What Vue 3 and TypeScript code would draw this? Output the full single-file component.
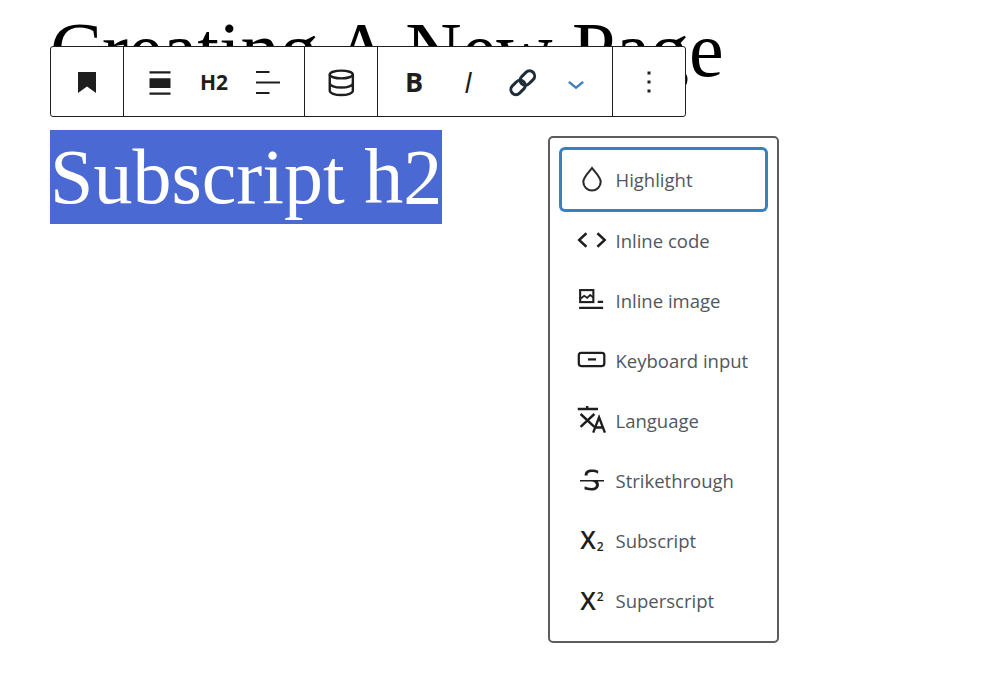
<script setup lang="ts">
interface FormatItem {
  label: string
  kind: 'highlight' | 'code' | 'image' | 'keyboard' | 'language' | 'strike' | 'sub' | 'sup'
}

const items: FormatItem[] = [
  { label: 'Highlight', kind: 'highlight' },
  { label: 'Inline code', kind: 'code' },
  { label: 'Inline image', kind: 'image' },
  { label: 'Keyboard input', kind: 'keyboard' },
  { label: 'Language', kind: 'language' },
  { label: 'Strikethrough', kind: 'strike' },
  { label: 'Subscript', kind: 'sub' },
  { label: 'Superscript', kind: 'sup' }
]
</script>

<template>
  <div class="editor">
    <h1 class="title">Creating A New Page</h1>
    <h2 class="heading"><span class="selected">Subscript h2</span></h2>

    <div class="toolbar">
      <div class="group">
        <button class="btn">
          <svg viewBox="0 0 24 24"><path d="M6 5.3h12v14l-6-4.3-6 4.3z" fill="#1e1e1e" /></svg>
        </button>
      </div>
      <div class="group">
        <button class="btn">
          <svg viewBox="0 0 24 24" fill="#1e1e1e"><path d="M5 4.8h14v1.5H5zM5 9.5h14v6.5H5zM5 19h14v1.5H5z" /></svg>
        </button>
        <button class="btn btn--h2">H2</button>
        <button class="btn">
          <svg viewBox="0 0 24 24" stroke="#1e1e1e" stroke-width="1.4" fill="none"><path d="M4 5.3h9M4 12.3h16M4 19.3h9" /></svg>
        </button>
      </div>
      <div class="group">
        <button class="btn">
          <svg viewBox="0 0 24 24" stroke="#1e1e1e" stroke-width="1.6" fill="none">
            <ellipse cx="12.2" cy="7" rx="7.7" ry="2.6" />
            <path d="M4.5 7v10.8c0 1.6 3.4 2.9 7.7 2.9s7.7-1.3 7.7-2.9V7M4.5 12.8c0 1.6 3.4 2.9 7.7 2.9s7.7-1.3 7.7-2.9" />
          </svg>
        </button>
      </div>
      <div class="group">
        <button class="btn btn--b">B</button>
        <button class="btn btn--i">I</button>
        <button class="btn">
          <svg viewBox="0 0 24 24" stroke="#1f2d38" stroke-width="2" fill="none">
            <g transform="rotate(-45 12.5 12.5)">
              <rect x="2.7" y="9.1" width="10.8" height="6.8" rx="3.4" />
              <rect x="11.5" y="9.1" width="10.8" height="6.8" rx="3.4" />
            </g>
          </svg>
        </button>
        <button class="btn">
          <svg viewBox="0 0 24 24" stroke="#3a7fc1" stroke-width="1.5" fill="none"><path d="M7.2 11.9l4.8 3.9 4.8-3.9" /></svg>
        </button>
      </div>
      <div class="group group--last">
        <button class="btn">
          <svg viewBox="0 0 24 24" fill="#1e1e1e"><path d="M13 19h-2v-2h2v2zm0-6h-2v-2h2v2zm0-6h-2V5h2v2z" /></svg>
        </button>
      </div>
    </div>

    <div class="menu">
      <div v-for="(item, i) in items" :key="item.kind" class="item" :class="{ 'item--focus': i === 0 }">
        <span class="item__icon">
          <svg v-if="item.kind === 'highlight'" viewBox="0 0 24 24" stroke="#2b2b2b" stroke-width="1.4" fill="none">
            <path d="M12 4c-1.4 2-5.8 6-5.8 9.2a5.8 5.8 0 0 0 11.6 0c0-3.2-4.4-7.2-5.8-9.2z" />
          </svg>
          <svg v-else-if="item.kind === 'code'" viewBox="0 0 24 24" stroke="#1e1e1e" stroke-width="1.6" fill="none">
            <path d="M8.3 7.5L3.4 12l4.9 4.5M15.6 7.5l4.9 4.5-4.9 4.5" />
          </svg>
          <svg v-else-if="item.kind === 'image'" viewBox="0 0 24 24" stroke="#1e1e1e" stroke-width="1.4" fill="none">
            <rect x="4.1" y="5.4" width="8.8" height="8" />
            <path d="M4.2 11.2l2.6-2 2 1.4 2-2 2.1 1.8" stroke-width="1.2" />
            <path d="M15.8 13.3h3.6M3.4 17.3h16" stroke-width="1.5" />
          </svg>
          <svg v-else-if="item.kind === 'keyboard'" viewBox="0 0 24 24" stroke="#1e1e1e" stroke-width="1.5" fill="none">
            <rect x="3.2" y="7.2" width="17" height="8.8" rx="1.6" />
            <path d="M9.3 11.6h5.4" />
          </svg>
          <svg v-else-if="item.kind === 'language'" viewBox="0 0 24 24" stroke="#1e1e1e" stroke-width="1.6" fill="none">
            <path d="M2.5 4.7H16M8.8 2.7v2M4.4 8l9.2 8.6M13.6 8l-9.2 8.6" />
            <path d="M12.8 20.4l3.9-10.2 3.9 10.2M14.2 17h5" />
          </svg>
          <svg v-else-if="item.kind === 'strike'" viewBox="0 0 24 24" fill="#1e1e1e">
            <path d="M9.1 9v-.5c0-.6.2-1.1.7-1.4.5-.3 1.2-.5 2-.5.7 0 1.4.1 2.1.3.7.2 1.4.5 2.1.9l.2-1.9c-.6-.3-1.2-.5-1.9-.7-.8-.1-1.6-.2-2.4-.2-1.5 0-2.7.3-3.6 1-.8.7-1.2 1.5-1.2 2.6V9h2zM20 12H4v1h8.3c.3.1.6.2.8.3.5.2.9.5 1.1.8.3.3.4.7.4 1.2 0 .7-.2 1.1-.8 1.5-.5.3-1.2.5-2.1.5-.8 0-1.6-.1-2.4-.3-.8-.2-1.5-.5-2.2-.8L7 18.1c.5.2 1.2.4 2 .6.8.2 1.6.3 2.4.3 1.7 0 3-.3 3.9-1 .9-.7 1.3-1.6 1.3-2.8 0-.9-.2-1.7-.7-2.2H20v-1z" />
          </svg>
          <span v-else-if="item.kind === 'sub'" class="glyph">X<small class="sub">2</small></span>
          <span v-else class="glyph">X<small class="sup">2</small></span>
        </span>
        <span class="item__label">{{ item.label }}</span>
      </div>
    </div>
  </div>
</template>

<style scoped>
.editor {
  position: relative;
  height: 700px;
  padding: 3px 50px 0;
  box-sizing: border-box;
  font-family: "Liberation Serif", serif;
  background: #fff;
  overflow: hidden;
}

.title,
.heading {
  margin: 0;
  font-size: 78px;
  line-height: 94px;
  font-weight: 400;
  color: #000;
}

.heading {
  margin-top: 33px;
}

.selected {
  display: inline-block;
  background: #4a69d3;
  color: #fff;
}

.toolbar {
  position: absolute;
  left: 50px;
  top: 46px;
  display: flex;
  height: 71px;
  box-sizing: border-box;
  border: 1px solid #1e1e1e;
  border-radius: 3px;
  background: #fff;
}

.group {
  display: flex;
  align-items: center;
  height: 71px;
  margin-top: -1px;
  padding: 0 9px;
  box-sizing: border-box;
  border-right: 1px solid #1e1e1e;
}

.group--last {
  border-right: 0;
}

.btn {
  display: flex;
  align-items: center;
  justify-content: center;
  width: 54px;
  height: 54px;
  padding: 0;
  border: 0;
  background: none;
  color: #1e1e1e;
  font-family: "Open Sans", sans-serif;
}

.btn svg {
  width: 36px;
  height: 36px;
}

.btn--h2 {
  font-size: 21px;
  font-weight: 700;
}

.btn--b {
  font-size: 27px;
  font-weight: 700;
}

.btn--i {
  font-size: 29px;
  font-style: italic;
  font-weight: 500;
}

.menu {
  position: absolute;
  left: 548px;
  top: 136px;
  width: 231px;
  height: 507px;
  padding: 12px;
  box-sizing: border-box;
  border: 2px solid #5c5c5c;
  border-radius: 5px;
  background: #fff;
  font-family: "Open Sans", sans-serif;
}

.item {
  display: flex;
  align-items: center;
  gap: 5.5px;
  height: 60px;
  padding-left: 12px;
  border-radius: 3px;
  color: #50575e;
  font-size: 18.5px;
}

.item--focus {
  height: 59px;
  margin-bottom: 1px;
  box-shadow: 0 0 0 3px #3a7fc1;
}

.item__icon {
  display: flex;
  align-items: center;
  justify-content: center;
  width: 36px;
  height: 36px;
  flex-shrink: 0;
}

.item__icon svg {
  width: 36px;
  height: 36px;
}

.glyph {
  color: #1e1e1e;
  font-size: 25px;
  font-weight: 600;
  line-height: 1;
}

.sub,
.sup {
  margin-left: 1px;
  font-size: 12px;
  font-weight: 600;
}

.sub {
  vertical-align: -2px;
}

.sup {
  vertical-align: 9px;
}
</style>
